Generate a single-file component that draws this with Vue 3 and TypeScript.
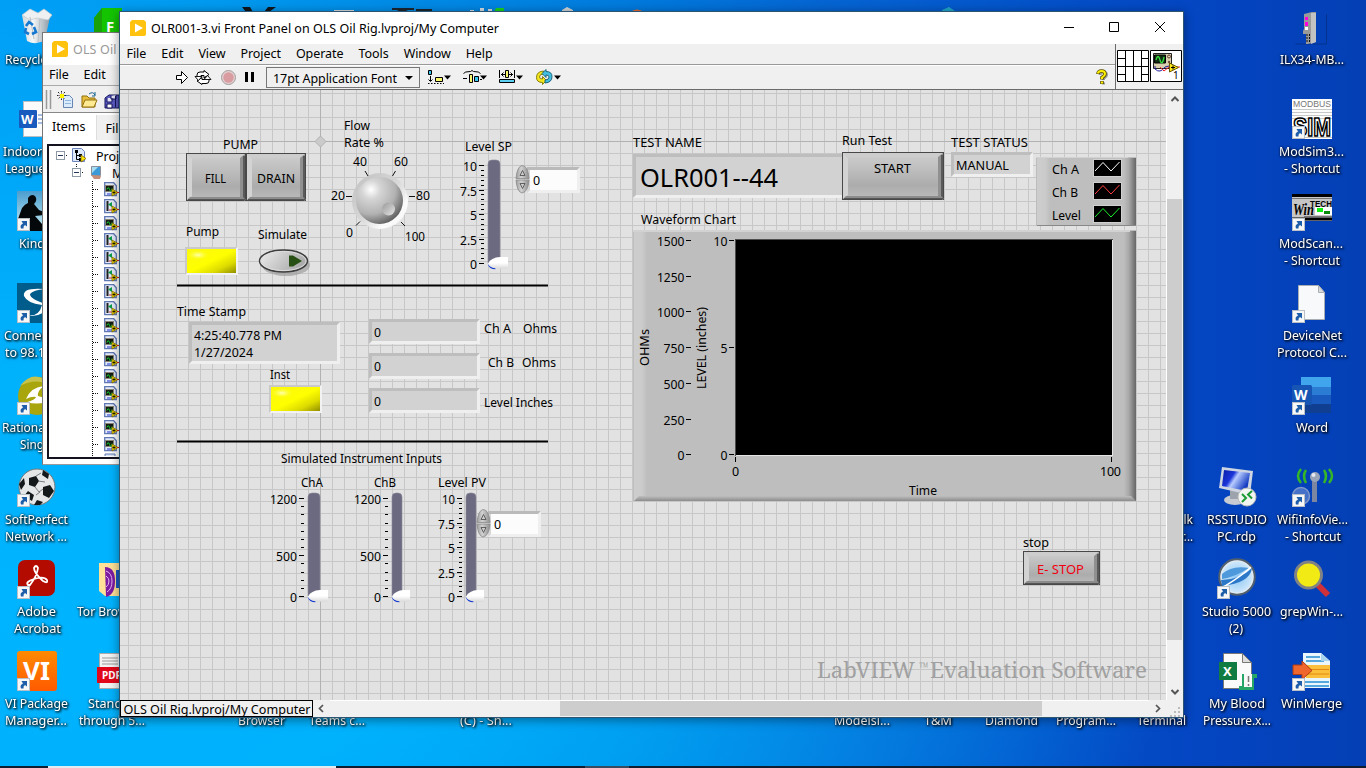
<script setup lang="ts">
type Label = { t: string; x: number; y: number; w?: number; s?: number; c?: string }
type Box = { x: number; y: number; w: number; h: number }
type Slider = { bar: number; w: number; top: number; zero: number; full: number; n: number; major: number[]; tick: number; knob: number }

const L = (t: string, x: number, y: number, w?: number, s = 12.5, c = '#000'): Label => ({ t, x, y, w, s, c })

const menus = ['File', 'Edit', 'View', 'Project', 'Operate', 'Tools', 'Window', 'Help']

const desktopLabels: Label[] = [
  L('Recycle Bin', 5, 64, 64), L('Indoor', 3, 156, 39), L('League', 5, 173, 40), L('Kindle', 19, 248, 36),
  L('Connect', 4, 340, 48), L('to 98.1', 5, 357, 40), L('Rational', 2, 432, 46), L('Sing', 20, 449, 24),
  L('SoftPerfect', 5, 524, 63), L('Network ...', 5, 541, 62), L('Adobe', 17, 616, 39), L('Acrobat', 14, 633, 47),
  L('VI Package', 5, 708, 63), L('Manager...', 5, 725, 62), L('Tor Browser', 77, 616, 68),
  L('Standard', 88, 708, 54), L('through 5...', 79, 725, 66), L('Browser', 238, 725, 47), L('Teams c...', 309, 725, 56),
  L('(C) - Sh...', 460, 725, 52), L('Modelsi...', 834, 725, 56), L('T&M', 924, 725, 28), L('Diamond', 985, 725, 53),
  L('Program...', 1056, 725, 60), L('Terminal', 1137, 725, 49), L('Talk', 1171, 524, 22), L('r...', 1181, 541, 12),
  L('ILX34-MB...', 1280, 64, 64), L('ModSim3...', 1279, 156, 65), L('- Shortcut', 1284, 173, 56),
  L('ModScan...', 1279, 248, 64), L('- Shortcut', 1284, 265, 56), L('DeviceNet', 1283, 340, 59),
  L('Protocol C...', 1277, 357, 70), L('Word', 1296, 432, 32), L('RSSTUDIO', 1207, 524, 60), L('PC.rdp', 1217, 541, 39),
  L('WifiInfoVie...', 1277, 524, 71), L('- Shortcut', 1285, 541, 56), L('Studio 5000', 1202, 616, 69), L('(2)', 1229, 633, 14),
  L('grepWin-...', 1280, 616, 63), L('My Blood', 1209, 708, 56), L('Pressure.x...', 1203, 725, 68), L('WinMerge', 1281, 708, 61),
]

const shortcuts: [number, number][] = [
  [17, 218], [17, 310], [17, 402], [17, 494], [17, 586], [17, 678],
  [1292, 126], [1292, 218], [1292, 310], [1292, 402], [1292, 494], [1217, 586], [1292, 678],
]

const panelLabels: Label[] = [
  L('PUMP', 223, 149, 35), L('Flow', 344, 130, 26), L('Rate %', 344, 147, 40),
  L('40', 353, 166, 14), L('60', 394, 166, 14), L('20', 331, 200, 14), L('80', 416, 200, 14), L('0', 346, 237, 7), L('100', 405, 241, 20),
  L('Level SP', 465, 151, 47), L('10', 463, 171, 14), L('7.5', 460, 196, 17), L('5', 470, 220, 7), L('2.5', 460, 245, 17), L('0', 470, 269, 7),
  L('Pump', 186, 236, 33), L('Simulate', 258, 239, 49), L('Time Stamp', 177, 316, 69), L('Inst', 270, 379, 20),
  L('Ch A', 484, 333, 27), L('Ohms', 523, 333, 34), L('Ch B', 488, 367, 26), L('Ohms', 522, 367, 34), L('Level Inches', 484, 407, 69),
  L('Simulated Instrument Inputs', 281, 463, 161), L('ChA', 301, 487, 22), L('ChB', 374, 487, 22), L('Level PV', 438, 487, 48),
  L('1200', 270, 504, 27), L('500', 276, 561, 21), L('0', 290, 602, 7),
  L('1200', 354, 504, 27), L('500', 360, 561, 21), L('0', 374, 602, 7),
  L('10', 442, 504, 13), L('7.5', 438, 529, 17), L('5', 448, 553, 7), L('2.5', 438, 578, 17), L('0', 448, 602, 7),
  L('TEST NAME', 633, 147, 69), L('Run Test', 842, 145, 50), L('TEST STATUS', 951, 147, 77),
  L('Waveform Chart', 641, 224, 95), L('stop', 1023, 547, 26),
]

const insets: Box[] = [
  { x: 189, y: 322, w: 151, h: 42 }, { x: 369, y: 319, w: 111, h: 25 }, { x: 369, y: 353, w: 111, h: 26 },
  { x: 369, y: 388, w: 111, h: 25 }, { x: 633, y: 154, w: 212, h: 44 }, { x: 951, y: 152, w: 82, h: 25 },
]
const insetTexts: Label[] = [
  L('4:25:40.778 PM', 194, 340, 88), L('1/27/2024', 194, 357, 59), L('0', 374, 337, 7), L('0', 374, 371, 7), L('0', 374, 406, 7),
  L('OLR001--44', 640, 187, 138, 25), L('MANUAL', 956, 170, 53),
]

const buttons: (Box & { label: Label })[] = [
  { x: 186, y: 153, w: 60, h: 48, label: L('FILL', 205, 183, 21) },
  { x: 246, y: 153, w: 60, h: 48, label: L('DRAIN', 257, 183, 38) },
  { x: 842, y: 152, w: 102, h: 48, label: L('START', 874, 173, 37) },
  { x: 1023, y: 551, w: 77, h: 34, label: L('E- STOP', 1037, 574, 47, 12.5, '#f00012') },
]

const leds: Box[] = [{ x: 187, y: 249, w: 49, h: 24 }, { x: 271, y: 387, w: 49, h: 24 }]

const sliders: Slider[] = [
  { bar: 488, w: 12, top: 160, zero: 263.5, full: 165.5, n: 20, major: [0, 5, 10, 15, 20], tick: 484, knob: 20 },
  { bar: 308, w: 12, top: 493, zero: 596.5, full: 498.5, n: 12, major: [0, 5, 12], tick: 304, knob: 20 },
  { bar: 392, w: 10, top: 493, zero: 596.5, full: 498.5, n: 12, major: [0, 5, 12], tick: 388, knob: 18 },
  { bar: 466, w: 10, top: 493, zero: 596.5, full: 498.5, n: 20, major: [0, 5, 10, 15, 20], tick: 462, knob: 18 },
]
const ticksOf = (s: Slider) =>
  Array.from({ length: s.n + 1 }, (_, i) => ({
    y: Math.round(s.zero - ((s.zero - s.full) * i) / s.n - 0.5) + 0.5,
    len: s.major.includes(i) ? 5 : 3,
  }))

const spinners = [{ x: 516, y: 166 }, { x: 477, y: 510 }]

const ohms = [1500, 1250, 1000, 750, 500, 250, 0].map((v, i) => ({
  v: String(v), y: Math.round(241 + i * 35.7), w: v > 999 ? 27.5 : v > 99 ? 21 : 7,
}))
const levels = [{ v: '10', y: 241, w: 14 }, { v: '5', y: 348, w: 7 }, { v: '0', y: 455, w: 7 }]
const legend = [
  { t: 'Ch A', y: 159, w: 27, c: '#fff' }, { t: 'Ch B', y: 182, w: 26, c: '#ff4040' }, { t: 'Level', y: 205, w: 29, c: '#19f02a' },
]

const treeRows = Array.from({ length: 16 }, (_, i) => ({ y: 183 + i * 17, green: [1, 3, 4, 5, 6, 7].includes(i) }))
</script>

<template>
  <main class="screen">
    <svg class="desktop" width="1366" height="768" viewBox="0 0 1366 768">
      <defs>
        <linearGradient id="bin" x1="0" x2="1"><stop offset="0" stop-color="#d4d8dc" /><stop offset=".4" stop-color="#f4f6f7" /><stop offset="1" stop-color="#8c9aa5" /></linearGradient>
        <linearGradient id="scr" x1="0" x2="1" y2=".5"><stop offset="0" stop-color="#0a1ca8" /><stop offset=".4" stop-color="#1a35d8" /><stop offset=".55" stop-color="#b8ccff" /><stop offset="1" stop-color="#1038c0" /></linearGradient>
        <radialGradient id="orb"><stop offset="0" stop-color="#8cc6f4" /><stop offset="1" stop-color="#d6ebfb" /></radialGradient>
        <linearGradient id="sky" x1="0" y1="0" x2="0" y2="1"><stop offset="0" stop-color="#4a9dcf" /><stop offset="1" stop-color="#c9eef5" /></linearGradient>
        <linearGradient id="vip" x1="0" x2="0" y2="1"><stop offset="0" stop-color="#ff8a00" /><stop offset="1" stop-color="#ff5a00" /></linearGradient>
      </defs>
      <!-- recycle bin -->
      <path d="M22 15 L50 17 L45 40 Q36 46 27 41Z" fill="url(#bin)" />
      <path d="M22 15 L30 9 L38 13 L44 9 L52 15 L48 20 L37 18 L30 20Z" fill="#eef0f1" stroke="#c4c8cc" stroke-width=".7" />
      <path d="M30 17 L34 39 M40 19 L38 42" stroke="#b8bfc5" stroke-width="1" />
      <path d="M26 26 L29 22 L33 25 M34 27 L36 32 L32 34 M29 34 L25 32 L26 28" fill="none" stroke="#1477d0" stroke-width="2.6" />
      <path d="M94 18 L102 8 H122 V40 H94Z" fill="#14c400" /><path d="M94 18 L102 8 V40 H94Z" fill="#1aa008" />
      <text x="106" y="32" class="icon-text" font-size="15">F</text>
      <!-- traces of icons above the window -->
      <path d="M242 7 h8 l3 5 h-7z M276 7 h-8 l-4 5 h5z" fill="#10151c" />
      <path d="M334 10 h20 v2 h-20z" fill="#d9dcde" /><path d="M392 8 h22 v2 h-6 l-4 2 h-4 l-3 -2 h-5z M416 9 h16 v3 h-16z" fill="#1b2630" />
      <path d="M470 10 h4 v2 h-4z M480 8 h4 v4 h-4z M488 9 h4 v3 h-4z" fill="#d4dde3" /><path d="M496 8 h8 v4 h-10z" fill="#1bd21b" />
      <path d="M562 10 l5 -3 l6 3 v2 h-11z" fill="#d0d5d8" /><path d="M630 12 q7 -5 14 0z" fill="#ef6a35" /><path d="M942 10 l7 -3 l6 4 v1 h-13z" fill="#20a5c9" />
      <!-- document -->
      <rect x="23.500" y="101.500" width="26" height="35" fill="#fbfbfb" stroke="#b9bdc4" /><path d="M38 115 h10 M38 119 h10 M38 123 h10" stroke="#4a7dc4" />
      <rect x="19" y="110" width="18" height="18" rx="1" fill="#185abd" /><text x="21" y="124" class="icon-text" font-size="13">W</text>
      <rect x="17" y="191" width="40" height="40" fill="url(#sky)" />
      <path d="M28 198 q3 -5 7 -2 q3 4 -1 8 l5 6 l5 2 v3 l-9 1 l7 8 v7 h-24 v-12 l4 -11 q3 -4 6 -5z" fill="#05080a" />
      <rect x="17" y="283" width="40" height="40" fill="#005c8a" /><path d="M45 289 Q22 287 24 296 Q27 303 42 305 Q39 318 25 315 Q42 319 50 305 Q30 300 30 294 Q33 290 45 289Z" fill="#fff" />
      <circle cx="37" cy="396" r="19" fill="#a9a50c" /><path d="M20 386 Q35 366 55 388 Q38 376 20 386Z" fill="#c6c34c" /><path d="M26 399 Q31 387 44 386 Q37 391 38 396 Q48 398 46 402 Q36 405 27 402 Q35 400 36 397 Q32 396 26 399Z" fill="#fff" />
      <circle cx="37" cy="487" r="18" fill="#e5e6e7" /><circle cx="37" cy="487" r="18" fill="none" stroke="#73777a" />
      <path d="M29 478 l7 -2 l3 5 l-4 6 l-6 -2z M43 487 l7 -2 l4 6 l-5 7 l-6 -3z M28 491 l6 4 l-2 6 l-8 -5z M43 470 l6 4 l-1 5 l-6 -4z M19 484 l5 -6 l1 6 l-4 6z M37 500 l6 2 l-3 3 h-6z" fill="#14181b" />
      <path d="M38 481 l7 1 M35 487 l4 5 l4 -3 M36 495 l4 -3 M36 476 l5 -3" stroke="#5b6064" fill="none" stroke-width=".8" />
      <rect x="18" y="560" width="37" height="36" rx="7" fill="#b30b00" />
      <path d="M28 585 Q25 582 34 579 Q44 576 47 580 Q48 584 43 581 Q34 573 34 568 Q36 564 38 568 Q37 576 30 585Z" fill="none" stroke="#fff" stroke-width="1.800" />
      <rect x="17" y="651" width="40" height="40" rx="3" fill="url(#vip)" /><text x="23" y="680" class="icon-text" font-size="25" textLength="27" lengthAdjust="spacingAndGlyphs">VI</text>
      <path d="M99 563 h22 v33 h-16 l-6 -5z" fill="#ffe197" /><path d="M105 567 q10 0 10 14 q0 14 -9 16z" fill="#7d1ba3" /><path d="M106 571 q6 2 6 10 q0 8 -5 11 M106 576 q3 2 3 5 q0 4 -3 6" stroke="#e2b5f2" fill="none" /><rect x="116" y="570" width="5" height="18" fill="#1a5bc4" />
      <path d="M99.500 653.500 h21 v35 h-21z" fill="#f3f3f3" stroke="#aaa" /><path d="M102 658 h16 M102 661 h16 M102 664 h16" stroke="#999" /><rect x="97" y="667" width="25" height="16" fill="#e2061b" /><text x="102" y="679" class="icon-text" font-size="10">PDF</text>
      <!-- module -->
      <path d="M1326.500 14 v30 h-31" fill="none" stroke="#03338e" />
      <path d="M1304 14 l8 -2 h4 v30 l-8 2 h-2 v-10 h-3 v-3 l1 -2z" fill="#9a9a9a" /><path d="M1311 13 h5 v29 l-5 2z" fill="#c2c2c2" /><path d="M1305 17 h3 v3 h-3z M1305 22 h3 v4 h-3z" fill="#ff00dc" /><path d="M1305 27 h3 v3 h-3z" fill="#fff" /><path d="M1307 34 v9 M1309.500 34 v9" stroke="#111" stroke-dasharray="2 1" />
      <!-- modbus simulator -->
      <rect x="1292" y="99" width="40" height="40" fill="#fff" /><path d="M1292 109.500 h40 M1292 112.500 h40 M1292 115.500 h40 M1292 118.500 h40 M1292 137.500 h40" stroke="#c8c8c8" />
      <text x="1293" y="107" font-size="9" fill="#777" class="pixel" textLength="38" lengthAdjust="spacingAndGlyphs">MODBUS</text>
      <text x="1293" y="136" font-size="25" font-weight="700" fill="#fff" stroke="#000" stroke-width="1.600" class="pixel" textLength="38" lengthAdjust="spacingAndGlyphs">SIM</text>
      <!-- scanner -->
      <rect x="1292" y="194" width="40" height="27" fill="#c6c6c6" /><path d="M1292 195.500 h40 M1292 219 h40" stroke="#000" stroke-width="3" /><path d="M1292 198.500 h40 M1304 216.500 h28" stroke="#777" />
      <text x="1293" y="215" class="script" font-size="17" textLength="21" lengthAdjust="spacingAndGlyphs">Win</text>
      <text x="1310" y="207" font-size="9" font-weight="700" class="pixel" textLength="22" lengthAdjust="spacingAndGlyphs">TECH</text>
      <rect x="1315" y="207" width="17" height="8" fill="#fff" /><rect x="1317" y="208" width="6" height="4" fill="#10f010" /><rect x="1324" y="211" width="6" height="3" fill="#0b8b0b" />
      <!-- blank file -->
      <path d="M1298.500 285.500 h20 l6 7 v27 h-26z" fill="#f8f9fa" stroke="#a9aeb4" /><path d="M1318.500 285.500 v7 h6z" fill="#d7d9db" stroke="#a9aeb4" />
      <!-- word -->
      <g><rect x="1301" y="377" width="30" height="10" fill="#41a5ee" /><rect x="1301" y="387" width="30" height="8" fill="#2b7cd3" /><rect x="1301" y="395" width="30" height="9" fill="#185abd" /><rect x="1301" y="404" width="30" height="9" fill="#103f91" /><rect x="1292" y="385" width="20" height="20" rx="1.500" fill="#1755b5" /><text x="1294" y="400" class="icon-text" font-size="14">W</text></g>
      <!-- remote desktop -->
      <ellipse cx="1235" cy="500" rx="11" ry="5" fill="#c8ccd2" /><path d="M1230 490 h9 v9 h-9z" fill="#9da3ad" /><path d="M1222 467 L1253 471 L1250 495 L1219 488Z" fill="#ced5e2" /><path d="M1224 470 L1250 473 L1247 491 L1222 486Z" fill="url(#scr)" />
      <circle cx="1247" cy="497" r="9" fill="#f2f4f2" stroke="#b9bdb9" /><path d="M1242 494 l4 4 l-4 4 M1252 491 l-4 3.500 l4 4" fill="none" stroke="#1b9a33" stroke-width="2" />
      <!-- wifi -->
      <rect x="1312" y="478" width="5" height="24" fill="#7c86a0" /><circle cx="1315" cy="477" r="5" fill="#9aa4b8" /><circle cx="1313.500" cy="475" r="2" fill="#e3e8f2" />
      <path d="M1306 470 q-4 6 0 13 M1301 469 q-6 7 0 14 M1324 470 q4 6 0 13 M1329 469 q6 7 0 14" fill="none" stroke="#35b626" stroke-width="2.500" />
      <circle cx="1301" cy="496" r="8.500" fill="#4571c9" stroke="#7f97c9" stroke-width="1.500" />
      <!-- studio -->
      <circle cx="1237" cy="577" r="17.500" fill="url(#orb)" stroke="#53606c" stroke-width="2.500" /><circle cx="1237" cy="577" r="16" fill="none" stroke="#dfe9f1" stroke-width="1.500" />
      <path d="M1221 580 Q1240 580 1252 568 Q1250 583 1222 586Z" fill="#2b78c9" /><path d="M1222 574 Q1232 565 1249 568 Q1235 577 1222 579Z" fill="#4e98dc" /><path d="M1222 588 Q1243 575 1251 567" stroke="#fff" fill="none" stroke-width="1.500" />
      <!-- magnifier -->
      <path d="M1318 585 l10 10" stroke="#d0303a" stroke-width="6" stroke-linecap="butt" /><circle cx="1308.500" cy="575" r="13" fill="#f2ea14" stroke="#808284" stroke-width="3" />
      <!-- spreadsheet -->
      <path d="M1223.500 653.500 h19 l9 9 v26 h-28z" fill="#fafafa" stroke="#777" /><path d="M1242.500 653.500 v9 h9z" fill="#ddd" stroke="#777" /><rect x="1219" y="662" width="18" height="18" fill="#107c41" /><text x="1223" y="676" class="icon-text" font-size="13">X</text>
      <path d="M1242 674 h15 v4 h-3 v12 h-15 v-4 h3z" fill="#25a566" /><rect x="1244" y="674" width="8" height="13" fill="#f8f8f8" /><path d="M1248.500 676 v6 M1248.500 684 v2" stroke="#777" stroke-width="1.500" />
      <!-- merge -->
      <path d="M1303 653 h18 l9 8 v27 h-27z" fill="#eaf5fc" /><path d="M1306 657 h14 M1306 661 h18 M1304 682 h25 M1304 686 h25" stroke="#54a7dc" stroke-width="2" /><rect x="1306" y="665" width="24" height="13" fill="#fbbf3c" /><path d="M1308 669.500 h21 M1308 674 h21" stroke="#e18a10" /><path d="M1321 653 l9 8 h-9z" fill="#a8d3ef" />
      <path d="M1293 665 h9 v-4 l10 9.500 l-10 9 v-5 h-9z" fill="#f0672e" stroke="#b33b13" />
      <g v-for="([x, y], i) in shortcuts" :key="'s' + i" :transform="`translate(${x} ${y})`">
        <rect x=".5" y=".5" width="12" height="12" fill="#f7f7f7" stroke="#b9bfc6" />
        <path d="M4 10.500 Q2.500 7 6 5.500 L4.500 3 L10 3 L10 8.500 L8 7 Q6 8 6.500 10.500Z" fill="#1f5fa9" />
      </g>
      <g class="desk-labels">
        <text v-for="(l, i) in desktopLabels" :key="i" :x="l.x" :y="l.y" :textLength="l.w" lengthAdjust="spacingAndGlyphs">{{ l.t }}</text>
      </g>
      <rect y="766" width="1366" height="2" fill="#101c30" /><rect x="48" y="766" width="288" height="2" fill="#e3ebee" /><rect x="585" y="766" width="44" height="2" fill="#3a4b60" />
    </svg>

    <section class="window project">
      <header class="titlebar">
        <svg width="16" height="16" viewBox="0 0 16 16"><path d="M2 0 h12 l2 2 v12 q0 2 -2 2 h-14 v-14z" fill="#ffc20e" /><path d="M5 3.500 L13 8 L5 12.500Z" fill="#fff" /></svg>
        <span>OLS Oil</span>
      </header>
      <nav class="menubar"><span>File</span><span>Edit</span></nav>
      <div class="tools">
        <svg width="76" height="26" viewBox="43 86 76 26">
          <path d="M46.500 90 v19 M50.500 90 v19" stroke="#999" stroke-width="1.500" />
          <path d="M63.500 95.500 h6 l3 3 v9 h-9z" fill="#dcebfa" stroke="#6685b2" /><path d="M65 100.500 h6 M65 103.500 h6" stroke="#8fb6dd" /><path d="M58 92 l7 7 M65 92 l-7 7 M57 95.500 h9 M61.500 91 v9" stroke="#222" stroke-dasharray="1.500 1" /><rect x="60" y="94" width="4" height="4" fill="#fff200" />
          <path d="M82 96 h5 l2 2 h6 v9 h-13z" fill="#e7bd3c" stroke="#92700f" /><path d="M85 100 h12 l-3 7 h-12z" fill="#ffea94" stroke="#92700f" /><path d="M89 94 q4 -3 6 1 m0 -3 v4 h-3" fill="none" stroke="#17638c" />
          <path d="M105 98 l4 -3 h10 v13 h-14z" fill="#5a5ac2" stroke="#14145c" /><path d="M107 98 v4 h5 v-4 M111 96 v3 h5 v-4" fill="#e4e6f8" stroke="#14145c" /><path d="M107 104 h5 v4 h-5z" fill="#fff" stroke="#14145c" /><path d="M115.500 96 v11" stroke="#14145c" />
        </svg>
      </div>
      <div class="tabs"><span class="on">Items</span><span>Files</span></div>
      <svg class="tree" width="72" height="318" viewBox="47 143 72 318">
        <rect x="47" y="145" width="73" height="315" fill="#14121f" /><rect x="49" y="147" width="71" height="311" fill="#fff" />
        <g fill="none" stroke="#111" stroke-dasharray="1 1">
          <path d="M92.500 182 V457 M62 156.500 h6 M78 173.500 h6 M76.500 165 v4" />
          <path v-for="r in treeRows" :key="'d' + r.y" :d="`M93 ${r.y + 7.500} h6`" />
        </g>
        <g fill="#fff" stroke="#8e99a6"><rect x="56.500" y="152.500" width="8" height="8" /><rect x="72.500" y="169.500" width="8" height="8" /></g>
        <path d="M58 156.500 h5 M74 173.500 h5" stroke="#27395b" />
        <path d="M72.500 149.500 h9 l3 3 v10 h-12z" fill="#dde8f8" stroke="#6d83bb" /><path d="M75 151 h3 v3 h-3z M79 155 h3 v3 h-3z M79 159 h3 v3 h-3z" /><path d="M76.500 154 v6.500 h3 M76.500 156.500 h3" stroke="#000" fill="none" /><path d="M81 156 l5 3.500 l-5 3.500z" fill="#ffe600" stroke="#806800" stroke-width=".8" />
        <path d="M91.500 167.500 h9 v9 h-9z" fill="#3c9bd6" stroke="#8a8f99" /><path d="M91 176 l3 4 h6 l1 -3z" fill="#c58e78" /><path d="M92 168 h6 l-6 6z" fill="#a5dcf4" />
        <g v-for="r in treeRows" :key="r.y" :transform="`translate(104 ${r.y})`">
          <path d="M.7 .7 h9 l2.600 3 v10 h-11.600z" fill="#e3eaf8" stroke="#6078b4" stroke-width="1.300" />
          <template v-if="r.green"><path d="M3.500 2 v10" stroke="#222" stroke-width="2" /><path d="M8 3 v5 l-4 -2.500z" fill="#0b9b47" /><path d="M5 11 h4" stroke="#d33" /></template>
          <template v-else><rect x="1.500" y="3.500" width="8" height="6" fill="#151c15" stroke="#8a8575" /><path d="M3 7.500 q1.200 -4 2.500 0 t2.500 -1" stroke="#0fcc2b" fill="none" /><path d="M3 12 h6" stroke="#2533d3" /></template>
          <path d="M8 7 l6 3.500 l-6 3.500z" fill="#ffe600" stroke="#7d6a00" stroke-width=".8" /><path d="M13 10.500 h3" stroke="#d22" /><path d="M8.500 10.500 h3 M10 9 v3" stroke="#000" stroke-width=".8" />
        </g>
        <path d="M105 457 v-2 h10 v2" fill="#dbe4f4" stroke="#6078b4" /><rect x="49" y="458" width="71" height="2" fill="#14121f" />
        <g class="tree-text"><text x="96" y="162">Proj</text><text x="112" y="179">M</text></g>
      </svg>
    </section>

    <section class="window front">
      <header class="titlebar">
        <svg width="16" height="16" viewBox="0 0 16 16"><path d="M2 0 h12 l2 2 v12 q0 2 -2 2 h-14 v-14z" fill="#ffc20e" /><path d="M5 3.500 L13 8 L5 12.500Z" fill="#fff" /></svg>
        <svg class="grow" width="360" height="32" viewBox="0 0 360 32"><text x="5" y="21" textLength="348" lengthAdjust="spacingAndGlyphs">OLR001-3.vi Front Panel on OLS Oil Rig.lvproj/My Computer</text></svg>
        <svg class="caption-buttons" width="138" height="32" viewBox="0 0 138 32"><path d="M19 15.500 h10 M64.500 10.500 h9 v9 h-9z M110 10 l10 10 M120 10 l-10 10" fill="none" stroke="#000" /></svg>
      </header>
      <div class="bars">
        <div class="bars-left">
          <nav class="menubar"><span v-for="m in menus" :key="m">{{ m }}</span></nav>
          <div class="toolbar">
            <svg width="96" height="24" viewBox="170 65 96 24">
              <path d="M176.500 75.500 h5 v-4 l6 6 l-6 6 v-4 h-5z" fill="#fff" stroke="#000" />
              <path d="M197 78 v-3 q0 -3 3 -3 h4 v-1.500 l5 4 l-5 3.500 v-2.500 h-3 v3z M209 78 v3 q0 2.500 -3 2.500 h-4 v1 l-5 -3.500 l5 -3.500 v2 h3 v-2.500z" fill="#fff" stroke="#000" /><path d="M195 76.500 l3.500 4 l3.500 -4z M204 79.500 l3.500 -4 l3.500 4z" fill="#fff" stroke="#000" stroke-width=".9" />
              <circle cx="228.500" cy="77.500" r="7" fill="#e3d0d1" stroke="#a39d9e" /><circle cx="228.500" cy="77.500" r="5.200" fill="#d99ca1" />
              <path d="M245 72 h3 v10 h-3z M251 72 h3 v10 h-3z" />
            </svg>
            <div class="font-box"><span>17pt Application Font</span><i class="caret"></i></div>
            <svg width="150" height="24" viewBox="420 65 150 24">
              <g stroke="#000">
                <path d="M428.500 70.500 h3 v4 h-3z" fill="#39c6ef" /><path d="M435.500 77.500 h7 v4 h-7z" fill="#fbf76c" /><path d="M430.500 76 v5 M428.500 79.500 l2 2 l2 -2" fill="none" /><path d="M428 83.500 h16" stroke-dasharray="1.500 1.500" />
                <path d="M463.500 73.500 q1 -2 7 -2 l1.500 -1 l1.500 1 q6 0 7 2" fill="none" /><path d="M469.500 74.500 h3 v8 h-3z" fill="#fbf76c" /><path d="M474.500 76.500 h4 v5 h-4z" fill="#39c6ef" /><path d="M463 78.500 h4 M480 79.500 h2" />
                <path d="M499.500 70 v8 M514.500 70 v8 M501 74.500 h12 M503.500 72.500 l-2 2 l2 2 M510.500 72.500 l2 2 l-2 2" fill="none" /><path d="M505.500 70.500 h3 v7 h-3z" fill="#fbf76c" /><path d="M499.500 79.500 h15 v3 h-15z" fill="#5cd0f0" />
              </g>
              <path d="M543.500 71 q-7 .5 -7 6.500 q0 5 6 5 v2 l4 -4 l-4 -4 v2.500 q-3 0 -3 -2 q0 -3 4 -3z" fill="#f5e51c" stroke="#7d7600" stroke-width=".9" /><path d="M545 83 q7 -.5 7 -6.500 q0 -5 -6 -5 v-2 l-4 4 l4 4 v-2.500 q3 0 3 2 q0 3 -4 3z" fill="#42bfe0" stroke="#145972" stroke-width=".9" />
              <path d="M444 75.500 h7 l-3.500 4z M480 75.500 h7 l-3.500 4z M516 75.500 h7 l-3.500 4z M554 75.500 h7 l-3.500 4z" />
            </svg>
            <svg class="help" width="14" height="18" viewBox="0 0 14 18"><path d="M4 6 Q4 3 7 3 Q10.500 3 10.500 6 Q10.500 7.500 7.500 9.500 V11 M7.500 13.500 v2" transform="translate(1 1)" stroke="#999" stroke-width="3" fill="none" /><path d="M3 6 Q3 3 6.500 3 Q10 3 10 6 Q10 7.500 7 9.500 V11.500 M7 13 v3" fill="none" stroke="#594f00" stroke-width="3.600" /><path d="M3 5.500 Q3 3 6.500 3 Q10 3 10 6 Q10 7.500 7 9.500 V11 M7 13.500 v2" fill="none" stroke="#fff000" stroke-width="2" /></svg>
          </div>
        </div>
        <svg class="connector" width="67" height="45" viewBox="1116 44 67 45">
          <path d="M1117.500 50.500 h31 v31 h-31z M1125.500 50 v32 M1133.500 50 v32 M1141.500 50 v32 M1117 66.500 h32 M1117 58.500 h8 M1117 74.500 h8 M1141 58.500 h8 M1141 74.500 h8" fill="#fff" stroke="#000" />
          <path d="M1150.500 50.500 h31 v31 h-31z" fill="#fff" stroke="#000" /><path d="M1153.500 53.500 h18 v15 h-18z" fill="#d8cfae" stroke="#222" /><path d="M1154.500 55 h11 v8 h-11z" fill="#102b12" stroke="#000" /><path d="M1156 60 q2 -7 4 0 t4 -3" fill="none" stroke="#34df3c" stroke-width="1.300" /><circle cx="1169" cy="56.500" r="1.500" fill="none" stroke="#603c30" /><circle cx="1169" cy="62" r="1.200" fill="#705040" />
          <path d="M1155 66 v3 q5 5 10 -2 l4 -1" fill="none" stroke="#20209f" /><path d="M1160 67 l4 4 l5 -4 l11 0" fill="none" stroke="#ef2525" /><path d="M1169.500 63 l9 4.500 l-9 4.500z" fill="#ffe61a" stroke="#6b5b00" /><path d="M1171 67.500 h4 M1173 65.500 v4" stroke="#000" />
          <text x="1173" y="79" font-size="10">1</text>
        </svg>
      </div>

      <div class="body">
        <svg class="canvas" width="1046" height="610" viewBox="120 90 1046 610">
          <defs>
            <pattern id="grid" x="128" y="93" width="12" height="12" patternUnits="userSpaceOnUse"><rect width="12" height="12" fill="#e2e2e2" /><path d="M0 .5 h12 M.5 0 v12" stroke="#c7c7c7" /></pattern>
            <linearGradient id="face" x1="0" y1="0" x2="0" y2="1"><stop offset="0" stop-color="#cfcfcf" /><stop offset=".45" stop-color="#b9b9b9" /><stop offset=".7" stop-color="#acacac" /><stop offset="1" stop-color="#bcbcbc" /></linearGradient>
            <linearGradient id="yellow" x1="0" y1="0" x2="1" y2="1"><stop offset="0" stop-color="#fbf80f" /><stop offset=".5" stop-color="#ffff00" /><stop offset=".75" stop-color="#dddb00" /><stop offset="1" stop-color="#918e00" /></linearGradient>
            <radialGradient id="gleam"><stop offset="0" stop-color="#ffffb8" /><stop offset="1" stop-color="#ffff20" stop-opacity="0" /></radialGradient>
            <radialGradient id="dial" cx=".32" cy=".27" r=".8"><stop offset="0" stop-color="#fff" /><stop offset=".25" stop-color="#d5d5d5" /><stop offset=".65" stop-color="#b2b2b2" /><stop offset="1" stop-color="#5b5b5b" /></radialGradient>
            <linearGradient id="dent" x1="0" y1="0" x2="1" y2="1"><stop offset="0" stop-color="#9a9a9a" /><stop offset=".5" stop-color="#bebebe" /><stop offset="1" stop-color="#e8e8e8" /></linearGradient>
            <linearGradient id="bezel" x1="0" y1="0" x2="1" y2="1"><stop offset="0" stop-color="#bbb" /><stop offset=".5" stop-color="#d7d7d7" /><stop offset=".75" stop-color="#fff" /><stop offset="1" stop-color="#f3f3f3" /></linearGradient>
            <linearGradient id="oval" x1="0" x2="1" y2=".4"><stop offset="0" stop-color="#efefef" /><stop offset="1" stop-color="#aaa" /></linearGradient>
            <linearGradient id="knob" x1="0" y1="0" x2="0" y2="1"><stop offset=".5" stop-color="#fff" /><stop offset="1" stop-color="#d8d8d8" /></linearGradient>
            <linearGradient id="spin" x1="0" y1="0" x2="1" y2="0"><stop offset="0" stop-color="#9a9a9a" /><stop offset=".4" stop-color="#d2d2d2" /><stop offset="1" stop-color="#8d8d8d" /></linearGradient>
            <linearGradient id="edgeL"><stop offset="0" stop-color="#b4b4b4" /><stop offset=".1" stop-color="#cdcdcd" /><stop offset=".65" stop-color="#cbcbcb" /><stop offset="1" stop-color="#bebebe" /></linearGradient>
            <linearGradient id="edgeR"><stop offset="0" stop-color="#bebebe" /><stop offset=".4" stop-color="#a8a8a8" /><stop offset="1" stop-color="#666" /></linearGradient>
            <linearGradient id="edgeB" x1="0" y1="0" x2="0" y2="1"><stop offset="0" stop-color="#bebebe" /><stop offset="1" stop-color="#8b8b8b" /></linearGradient>
          </defs>
          <rect x="120" y="90" width="1046" height="610" fill="url(#grid)" />
          <path d="M120 141.500 h1046 M320.500 90 v610" stroke="#b2b2b2" /><path d="M320.500 136 l5.500 5.500 l-5.500 5.500 l-5.500 -5.500z" fill="#cbcbcb" stroke="#b0b0b0" />

          <g v-for="(b, i) in insets" :key="'i' + i">
            <rect :x="b.x" :y="b.y" :width="b.w" :height="b.h" fill="#d2d2d2" />
            <path :d="`M${b.x} ${b.y} h${b.w} l-3 3 h${6 - b.w} v${b.h - 6} l-3 3z`" fill="#bebebe" />
            <path :d="`M${b.x + b.w} ${b.y} v${b.h} h${-b.w} l3 -3 h${b.w - 6} v${6 - b.h}z`" fill="#efefef" />
          </g>
          <text v-for="(l, i) in insetTexts" :key="'it' + i" :x="l.x" :y="l.y" :font-size="l.s" :textLength="l.w" lengthAdjust="spacingAndGlyphs">{{ l.t }}</text>

          <g v-for="(b, i) in buttons" :key="'b' + i">
            <rect :x="b.x + .5" :y="b.y + .5" :width="b.w - 1" :height="b.h - 1" fill="url(#face)" stroke="#484848" />
            <path :d="`M${b.x + 1} ${b.y + 1} l5 5 v${b.h - 11} l-5 4z`" fill="#d3d3d3" />
            <path :d="`M${b.x + 1} ${b.y + 1} h${b.w - 2} l-5 4 h${12 - b.w}z`" fill="#cdcdcd" />
            <path :d="`M${b.x + b.w - 1} ${b.y + 1} l-5 4 v${b.h - 9} l5 4z`" fill="#909090" />
            <path :d="`M${b.x + b.w - 2} ${b.y + 3} v${b.h - 5}`" stroke="#5a5a5a" stroke-width="2" />
            <path :d="`M${b.x + 1} ${b.y + b.h - 1} l3 -3 h${b.w - 7} l3 3z`" fill="#8c8c8c" />
            <path :d="`M${b.x + 2} ${b.y + b.h - 1.500} h${b.w - 3}`" stroke="#555" />
            <text :x="b.label.x" :y="b.label.y" :textLength="b.label.w" lengthAdjust="spacingAndGlyphs" :fill="b.label.c">{{ b.label.t }}</text>
          </g>

          <g v-for="(b, i) in leds" :key="'l' + i">
            <rect :x="b.x - 2" :y="b.y - 2" :width="b.w + 4" :height="b.h + 4" fill="#c9c9c9" /><path :d="`M${b.x + b.w + 2} ${b.y - 2} v${b.h + 4} h${-b.w - 4} l3 -3 h${b.w - 1} v${-b.h}z`" fill="#f2f2f2" />
            <rect :x="b.x" :y="b.y" :width="b.w" :height="b.h" fill="url(#yellow)" /><ellipse :cx="b.x + 11" :cy="b.y + 6" rx="11" ry="5" fill="url(#gleam)" />
          </g>

          <ellipse cx="286" cy="265" rx="24" ry="11" fill="#999" opacity=".65" /><ellipse cx="283.500" cy="261" rx="24" ry="11" fill="url(#oval)" stroke="#3e3e3e" stroke-width="1.500" />
          <ellipse cx="283.500" cy="261" rx="22.500" ry="9.500" fill="none" stroke="#ddd" /><path d="M289 255.500 h4 l9 5.500 l-9 5.500 h-4z" fill="#285014" />

          <path d="M177 285.500 h371 M177 441.500 h371" stroke="#000" stroke-width="2" />

          <circle cx="380" cy="201" r="28" fill="url(#bezel)" opacity=".9" /><circle cx="379.500" cy="200.500" r="23.500" fill="url(#dial)" /><circle cx="388.500" cy="209" r="6.500" fill="url(#dent)" />
          <path d="M365 171 l3 5 M395.500 171 l-3 5 M346 196.500 h6 M409 196.500 h6 M356 225.500 l4 -4 M401 222 l4 4" stroke="#111" />

          <g v-for="(s, i) in sliders" :key="'sl' + i">
            <path :d="`M${s.bar} ${s.zero} V${s.top + 4} q0 -4 4 -4 h${s.w - 8} q4 0 4 4 V${s.zero}z`" fill="#6b6a80" stroke="#8d8c9c" stroke-width=".6" />
            <path v-for="(t, j) in ticksOf(s)" :key="j" :d="`M${s.tick} ${t.y} h${-t.len}`" stroke="#000" />
            <path :d="`M${s.bar + .5} ${s.zero + .5} q1 4.500 7 4.500`" fill="none" stroke="#1238d0" stroke-width="1.300" />
            <path :d="`M${s.bar} ${s.zero} q3 -6 12 -6.500 h${s.knob - 12} v11.500 h${18 - s.knob} q-9 1 -14 -1 q-4 -2 -4 -4z`" fill="url(#knob)" />
          </g>

          <g v-for="(s, i) in spinners" :key="'sp' + i" :transform="`translate(${s.x} ${s.y})`">
            <rect x="11" y="1" width="53" height="26" fill="#d6d6d6" /><path d="M11 1 h53 l-3 3 h-50z" fill="#bababa" /><path d="M64 1 v26 h-53 l3 -3 h47 v-20z" fill="#efefef" /><rect x="14" y="4" width="47" height="20" fill="#fcfcfc" />
            <path d="M0 12.500 q1 -12 6 -13 q6 0 7 13z M0 14 h13 q-1 12 -7 13 q-5 -1 -6 -13z" fill="url(#spin)" stroke="#8a8a8a" stroke-width=".8" />
            <path d="M4 9.500 l2.500 -5 l2.500 5z M4 17.500 h5 l-2.500 5z" fill="#ccc" stroke="#555" stroke-width=".9" /><text x="17" y="19">0</text>
          </g>

          <g class="legend">
            <rect x="1037" y="157" width="99" height="69" fill="#bebebe" /><rect x="1036" y="157" width="14" height="69" fill="url(#edgeL)" /><rect x="1124" y="158" width="12" height="68" fill="url(#edgeR)" /><path d="M1037 225.500 h99" stroke="#888" /><path d="M1036 157.500 h92" stroke="#d2d2d2" />
            <g v-for="g in legend" :key="g.t"><text x="1052" :y="g.y + 15" :textLength="g.w" lengthAdjust="spacingAndGlyphs">{{ g.t }}</text><rect x="1093.500" :y="g.y + .5" width="28" height="17" fill="#000" stroke="#d0d0d0" /><path :d="`M1095 ${g.y + 12} l8 -8.500 l8 8.500 l8.500 -9`" fill="none" :stroke="g.c" /></g>
          </g>

          <g class="chart">
            <rect x="633" y="230" width="503" height="271" fill="#bebebe" /><rect x="633" y="231" width="14" height="270" fill="url(#edgeL)" /><rect x="1124" y="231" width="12" height="270" fill="url(#edgeR)" /><path d="M634 501 l5 -5 h492 l5 5z" fill="url(#edgeB)" /><path d="M633 231 h497" stroke="#d2d2d2" stroke-width="2" />
            <rect x="735.500" y="239.500" width="377" height="216" fill="#000" stroke="#4e4e4e" /><path d="M736 455.500 h377 M1112.500 240 v216" stroke="#e5e5e5" />
            <g v-for="o in ohms" :key="o.v"><text :x="684.500 - o.w" :y="o.y + 5" :textLength="o.w" lengthAdjust="spacingAndGlyphs">{{ o.v }}</text><path :d="`M686 ${o.y - .5} h5`" stroke="#000" /></g>
            <g v-for="o in levels" :key="'l' + o.v"><text :x="727.500 - o.w" :y="o.y + 5" :textLength="o.w" lengthAdjust="spacingAndGlyphs">{{ o.v }}</text><path :d="`M729 ${o.y - .5} h5`" stroke="#000" /></g>
            <text x="649" y="366" textLength="37" lengthAdjust="spacingAndGlyphs" transform="rotate(-90 649 366)">OHMs</text>
            <text x="706" y="389" textLength="82" lengthAdjust="spacingAndGlyphs" transform="rotate(-90 706 389)">LEVEL (inches)</text>
            <path d="M735.500 457 v5 M1111.500 457 v5" stroke="#000" /><text x="732" y="476">0</text><text x="1100" y="476" textLength="21">100</text><text x="909" y="495" textLength="28" lengthAdjust="spacingAndGlyphs">Time</text>
          </g>

          <text v-for="(l, i) in panelLabels" :key="'p' + i" :x="l.x" :y="l.y" :textLength="l.w" lengthAdjust="spacingAndGlyphs">{{ l.t }}</text>
          <g class="watermark"><text x="817" y="678" font-size="22" textLength="98" lengthAdjust="spacingAndGlyphs">LabVIEW</text><text x="919" y="672" font-size="13" textLength="9" lengthAdjust="spacingAndGlyphs">™</text><text x="930" y="678" font-size="22" textLength="217" lengthAdjust="spacingAndGlyphs">Evaluation Software</text></g>
        </svg>
        <div class="vscroll">
          <svg width="16" height="17" viewBox="0 0 16 17"><path d="M4.500 11 l3.500 -3.500 l3.500 3.500" fill="none" stroke="#555" stroke-width="2" /></svg>
          <div class="vtrack"><div class="vthumb"></div></div>
          <svg width="16" height="17" viewBox="0 0 16 17"><path d="M4.500 7 l3.500 3.500 l3.500 -3.500" fill="none" stroke="#555" stroke-width="2" /></svg>
        </div>
      </div>
      <footer class="status">
        <svg class="path-box" width="193" height="17" viewBox="0 0 193 17"><rect x=".5" y=".5" width="192" height="16" fill="#f0f0f0" stroke="#000" /><text x="3.500" y="14" textLength="187" lengthAdjust="spacingAndGlyphs">OLS Oil Rig.lvproj/My Computer</text></svg>
        <svg width="17" height="17" viewBox="0 0 17 17"><path d="M10 5 l-3.500 3.500 l3.500 3.500" fill="none" stroke="#555" stroke-width="1.700" /></svg>
        <div class="htrack"><div class="hthumb"></div></div>
        <svg width="17" height="17" viewBox="0 0 17 17"><path d="M7 5 l3.500 3.500 l-3.500 3.500" fill="none" stroke="#555" stroke-width="1.700" /></svg>
        <svg width="17" height="17" viewBox="0 0 17 17"><path d="M12 7 h2 v2 h-2z M8 11 h2 v2 h-2z M12 11 h2 v2 h-2z M4 15 h2 v2 h-2z M8 15 h2 v2 h-2z M12 15 h2 v2 h-2z" fill="#bcbcbc" /></svg>
      </footer>
    </section>
  </main>
</template>

<style>
html, body { margin: 0; overflow: hidden; }
</style>
<style scoped>
.screen {
  position: relative; width: 1366px; height: 768px; overflow: hidden;
  font-family: "Noto Sans", "Open Sans", sans-serif; font-size: 12.5px; color: #000;
  background:
    radial-gradient(ellipse 1180px 640px at 0 600px, #00b4ff 0%, #00b1fc 36%, rgba(0, 168, 245, 0) 100%),
    linear-gradient(90deg, #009df5 0, #009af0 180px, #007bdd 620px, #0564d2 830px, #0350c8 1060px, #0445c2 1200px, #043fb4 1366px);
}
svg { display: block; flex: none; }
svg text { font-family: "Noto Sans", "Open Sans", sans-serif; white-space: pre; }
.desktop { position: absolute; inset: 0; }
.desk-labels { fill: #fff; filter: drop-shadow(1px 1px 1px rgba(0, 0, 0, .95)) drop-shadow(0 0 1px rgba(0, 0, 0, .6)); }
.desk-labels text { font-size: 12.5px; }
.icon-text { font-weight: 700; fill: #fff; }
svg text.pixel { font-family: "Liberation Sans", sans-serif; }
svg text.script { font-family: "Liberation Serif", serif; font-style: italic; font-weight: 700; }
.window { position: absolute; display: flex; flex-direction: column; background: #f0f0f0; box-sizing: border-box; }
.project { left: 42px; top: 32px; width: 110px; height: 433px; border: 1px solid #777; border-bottom-color: #999; background: #fff; overflow: hidden; }
.project .titlebar { color: #999; padding-left: 9px; gap: 5px; letter-spacing: .15px; }
.titlebar { height: 32px; flex: none; display: flex; align-items: center; background: #fff; white-space: nowrap; }
.front .titlebar { padding-left: 10px; }
.grow { margin-right: auto; }
.menubar { display: flex; background: #f0f0f0; height: 20px; line-height: 20px; white-space: nowrap; box-sizing: border-box; }
.project .menubar { padding-left: 6px; gap: 15px; border-bottom: 1px solid #aaa; height: 21px; line-height: 19px; letter-spacing: -.1px; }
.tools { background: #f0f0f0; height: 27px; border-bottom: 1px solid #888; box-sizing: border-box; flex: none; }
.tabs { display: flex; height: 29px; line-height: 28px; flex: none; }
.tabs span { padding: 0 8px; background: #f0f0f0; margin-top: 2px; height: 25px; border-left: 1px solid #ddd; }
.tabs .on { background: #fff; padding: 0 11px 0 9px; margin: 0; border: 0; }
.tree { margin-left: 4px; }
.tree-text { font-size: 12.5px; }
.front { left: 119px; top: 11px; width: 1065px; height: 707px; border: 1px solid #2b5570; box-shadow: 0 2px 10px rgba(0, 0, 0, .42); }
.bars { display: flex; height: 46px; flex: none; box-sizing: border-box; border-bottom: 1px solid #6a6a6a; }
.bars-left { flex: 1; display: flex; flex-direction: column; }
.front .menubar { padding-left: 6.5px; gap: 15px; letter-spacing: -.06px; }
.toolbar { flex: 1; display: flex; align-items: center; padding-left: 50px; border-top: 1px solid #999; box-shadow: inset 0 1px #fff; }
.font-box { width: 154px; height: 21px; box-sizing: border-box; border: 1px solid #777; display: flex; align-items: center; justify-content: space-between; padding: 1px 6px 0; white-space: nowrap; line-height: 19px; margin-top: 1px; letter-spacing: -.06px; }
.caret { border: 4px solid transparent; border-top-color: #000; border-bottom: 0; }
.help { margin-left: auto; margin-right: 6px; }
.connector { border-left: 1px solid #6a6a6a; width: 67px; }
.body { display: flex; height: 610px; flex: none; }
.canvas { font-size: 12.5px; }
.watermark { fill: #a0a0a0; }
.watermark text { font-family: "Noto Serif", "DejaVu Serif", serif; }
.vscroll { width: 17px; box-sizing: border-box; border-left: 1px solid #fff; display: flex; flex-direction: column; background: #f0f0f0; }
.vtrack { flex: 1; }
.vthumb { margin-top: 92px; height: 441px; width: 15px; background: #cdcdcd; }
.status { height: 17px; display: flex; }
.htrack { flex: 1; border-top: 1px solid #fff; }
.hthumb { margin-left: 230px; width: 482px; height: 15px; background: #cdcdcd; }
</style>
